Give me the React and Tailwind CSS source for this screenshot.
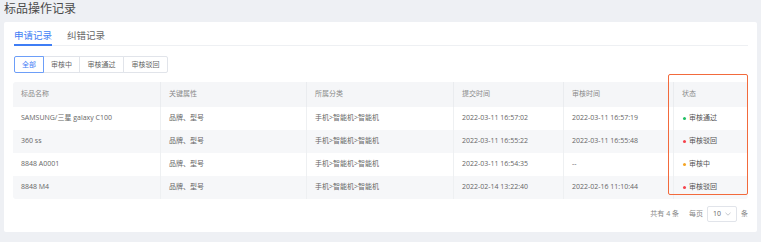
import { useState } from "react";

const rows = [
  {
    name: "SAMSUNG/三星 galaxy C100",
    attr: "品牌、型号",
    cat: "手机>智能机>智能机",
    submit: "2022-03-11 16:57:02",
    audit: "2022-03-11 16:57:19",
    status: "pass",
  },
  {
    name: "360 ss",
    attr: "品牌、型号",
    cat: "手机>智能机>智能机",
    submit: "2022-03-11 16:55:22",
    audit: "2022-03-11 16:55:48",
    status: "reject",
  },
  {
    name: "8848 A0001",
    attr: "品牌、型号",
    cat: "手机>智能机>智能机",
    submit: "2022-03-11 16:54:35",
    audit: "--",
    status: "pending",
  },
  {
    name: "8848 M4",
    attr: "品牌、型号",
    cat: "手机>智能机>智能机",
    submit: "2022-02-14 13:22:40",
    audit: "2022-02-16 11:10:44",
    status: "reject",
  },
];

const statusMap = {
  pass: { label: "审核通过", dot: "bg-[#1fbf62]" },
  reject: { label: "审核驳回", dot: "bg-[#f5424c]" },
  pending: { label: "审核中", dot: "bg-[#f5a524]" },
};

const filters = [
  { key: "all", label: "全部", w: "w-[30px]" },
  { key: "pending", label: "审核中", w: "w-[37px]" },
  { key: "pass", label: "审核通过", w: "w-[45px]" },
  { key: "reject", label: "审核驳回", w: "w-[45px]" },
];

const cols = [
  { title: "标品名称", w: "w-[148px]" },
  { title: "关键属性", w: "w-[146px]" },
  { title: "所属分类", w: "w-[147px]" },
  { title: "提交时间", w: "w-[110px]" },
  { title: "审核时间", w: "w-[110px]" },
  { title: "状态", w: "flex-1" },
];

export default function App() {
  const [tab, setTab] = useState("apply");
  const [filter, setFilter] = useState("all");

  return (
    <div className="w-[761px] h-[242px] overflow-hidden bg-[#eef0f4] font-['Open_Sans','Noto_Sans_CJK_SC',sans-serif]">
      <div className="h-[22px] pl-[4px] pt-[1px] text-[12px] leading-[16px] text-[#4a4a4a]">
        标品操作记录
      </div>
      <div className="relative ml-[4px] w-[753px] h-[210px] bg-white rounded-[2px] px-[9px]">
        {/* tabs */}
        <div className="ml-[1px] flex gap-[15px] h-[24px] border-b border-[#eef0f3] text-[9.5px]">
          <button
            onClick={() => setTab("apply")}
            className={
              tab === "apply"
                ? "-mb-px pt-[6px] leading-[12px] border-b-2 border-[#3f7ef5] text-[#3f7ef5]"
                : "-mb-px pt-[6px] leading-[12px] border-b-2 border-transparent text-[#666]"
            }
          >
            申请记录
          </button>
          <button
            onClick={() => setTab("fix")}
            className={
              tab === "fix"
                ? "-mb-px pt-[6px] leading-[12px] border-b-2 border-[#3f7ef5] text-[#3f7ef5]"
                : "-mb-px pt-[6px] leading-[12px] border-b-2 border-transparent text-[#666]"
            }
          >
            纠错记录
          </button>
        </div>

        {/* filter buttons */}
        <div className="ml-[1px] mt-[10px] flex h-[17px]">
          {filters.map((f, i) => (
            <button
              key={f.key}
              onClick={() => setFilter(f.key)}
              className={
                (filter === f.key
                  ? "relative z-10 border-[#6d9ef8] text-[#3f7ef5] "
                  : "border-[#e1e4ea] text-[#666] ") +
                f.w +
                (i > 0 ? " -ml-px" : "") +
                (i === 0 ? " rounded-l-[2px]" : "") +
                (i === filters.length - 1 ? " rounded-r-[2px]" : "") +
                " h-[17px] border bg-white text-[7px] leading-[15px]"
              }
            >
              {f.label}
            </button>
          ))}
        </div>

        {/* table */}
        <div className="mt-[9px] w-[735px] rounded-[3px] overflow-hidden text-[7px] text-[#666]">
          <div className="flex h-[25px] bg-[#f5f6f8] text-[#8a8a8a]">
            {cols.map((c, i) => (
              <div
                key={c.title}
                className={
                  c.w +
                  " flex items-center pl-[8px]" +
                  (i < cols.length - 1 ? " border-r border-[#eaecef]" : "")
                }
              >
                {c.title}
              </div>
            ))}
          </div>
          {rows.map((r, idx) => {
            const s = statusMap[r.status];
            const cells = [r.name, r.attr, r.cat, r.submit, r.audit];
            return (
              <div
                key={idx}
                className={
                  "flex h-[23px] " + (idx % 2 === 1 ? "bg-[#f6f7f9]" : "bg-white")
                }
              >
                {cells.map((v, i) => (
                  <div
                    key={i}
                    className={cols[i].w + " flex items-center pl-[8px] border-r border-[#eef0f2]"}
                  >
                    {v}
                  </div>
                ))}
                <div className="flex-1 flex items-center pl-[9px] gap-[3px] text-[#555]">
                  <span className={"w-[3px] h-[3px] rounded-full " + s.dot}></span>
                  {s.label}
                </div>
              </div>
            );
          })}
        </div>

        {/* highlight box */}
        <div className="absolute left-[664px] top-[52px] w-[80px] h-[121px] border-[1.5px] border-[#f26a3c] rounded-[2px] pointer-events-none"></div>

        {/* pagination */}
        <div className="mt-[7px] flex justify-end items-center text-[7px] text-[#888]">
          <span>共有 4 条</span>
          <span className="ml-[10px]">每页</span>
          <div className="ml-[4px] w-[30px] h-[16px] border border-[#e1e4ea] rounded-[2px] flex items-center justify-between px-[5px] text-[#666]">
            <span>10</span>
            <svg width="6" height="4" viewBox="0 0 6 4" fill="none">
              <path d="M0.5 0.8 L3 3.2 L5.5 0.8" stroke="#b5b9c0" strokeWidth="0.8" />
            </svg>
          </div>
          <span className="ml-[4px]">条</span>
        </div>
      </div>
    </div>
  );
}
